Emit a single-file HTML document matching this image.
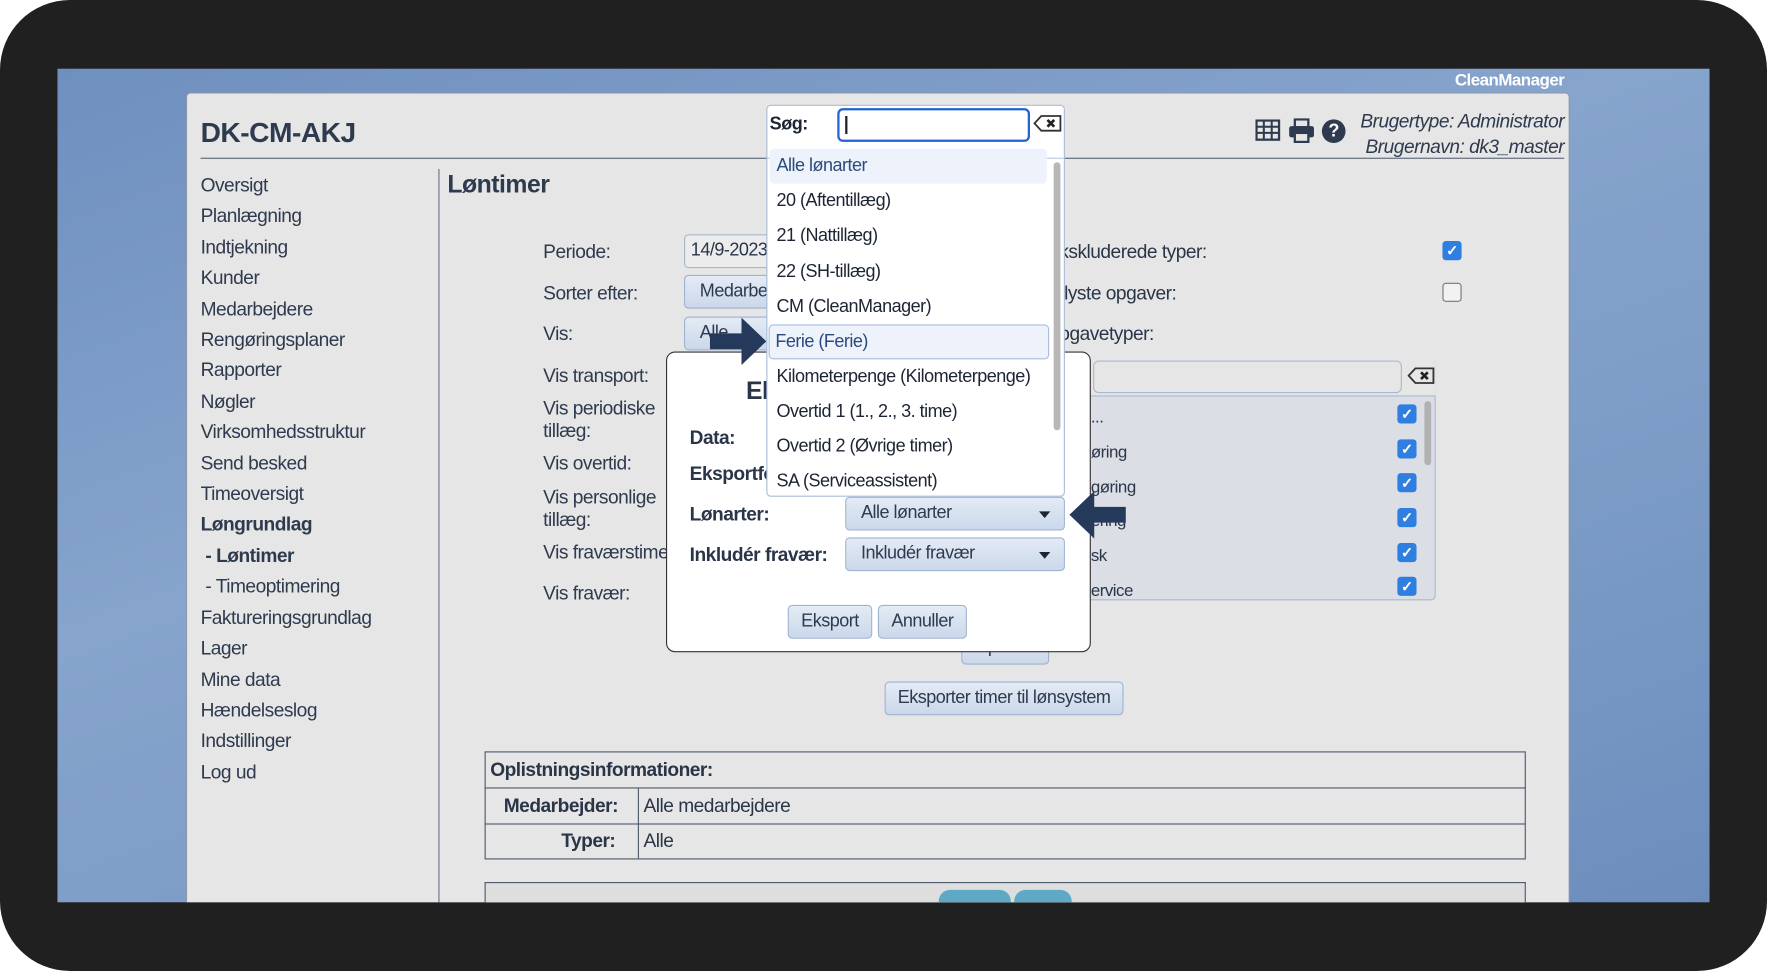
<!DOCTYPE html>
<html><head><meta charset="utf-8"><style>
*{box-sizing:border-box;margin:0;padding:0}
html,body{width:1767px;height:971px;overflow:hidden;background:#fff}
#s{position:absolute;left:0;top:0;width:1568px;height:862px;transform:scale(1.12691,1.12645);transform-origin:0 0;font-family:"Liberation Sans",sans-serif;color:#2a3548;letter-spacing:-0.45px}
.a{position:absolute}
#frame{left:0;top:0;width:1568px;height:862px;background:#202020;border-radius:62px}
#desk{left:51px;top:61px;width:1466px;height:740px;background:linear-gradient(160deg,#6f8fbf 0%,#86a4cc 40%,#7b9bc6 70%,#6d8ebd 100%)}
#panel{left:165px;top:82px;width:1228px;height:719px;background:#e6e6e6;border:1px solid #8a97aa;border-bottom:none;border-radius:4px 4px 0 0}
.side{left:178px;font-size:17px;color:#2e3a4e}
.lbl{left:482px;font-size:17px;color:#2e3a4e}
.btn{background:linear-gradient(#e3ebf5,#cbd8ea);border:1px solid #9fb3cf;border-radius:4px;font-size:16px;color:#2e3a4e;text-align:center}
.cb{width:17px;height:17px;border-radius:3px;background:#2f7fe0;color:#fff;font-size:13px;line-height:17px;text-align:center;font-weight:bold}
.item{left:689px;font-size:16px;color:#1d2433}
</style></head><body><div id="s">
<div class="a" id="frame"></div>
<div class="a" id="desk"></div>
<div class="a" style="left:1291px;top:63px;font-size:15px;font-weight:bold;color:#fff">CleanManager</div>
<div class="a" id="panel"></div>
<div class="a" style="left:178px;top:104px;font-size:25px;font-weight:bold;color:#2e3a4e">DK-CM-AKJ</div>
<div class="a" style="left:178px;top:140px;width:1210px;height:1px;background:#5a6578"></div>
<svg class="a" style="left:1114px;top:106px" width="24" height="20" viewBox="0 0 24 20"><rect x="1" y="1" width="20" height="17" fill="none" stroke="#2e3a4e" stroke-width="2"/><path d="M1 6.5H21M1 12H21M7.5 1V18M14.5 1V18" stroke="#2e3a4e" stroke-width="1.8"/></svg>
<svg class="a" style="left:1143px;top:105px" width="24" height="22" viewBox="0 0 24 22"><rect x="6" y="1" width="12" height="7" fill="none" stroke="#2e3a4e" stroke-width="2"/><rect x="1" y="7" width="22" height="10" rx="2" fill="#2e3a4e"/><rect x="6" y="13" width="12" height="8" fill="#e6e6e6" stroke="#2e3a4e" stroke-width="2"/></svg>
<div class="a" style="left:1173px;top:106px;width:21px;height:21px;border-radius:50%;background:#2e3a4e;color:#fff;font-weight:bold;font-size:16px;text-align:center;line-height:21px">?</div>
<div class="a" style="left:1190px;top:96px;width:198px;text-align:right;font-style:italic;font-size:17px;line-height:23px;color:#2e3a4e">Brugertype: Administrator<br>Brugernavn: dk3_master</div>
<div class="a side" style="top:151px;line-height:27.4px">Oversigt<br>Planlægning<br>Indtjekning<br>Kunder<br>Medarbejdere<br>Rengøringsplaner<br>Rapporter<br>Nøgler<br>Virksomhedsstruktur<br>Send besked<br>Timeoversigt<br><b>Løngrundlag</b><br><b>&nbsp;- Løntimer</b><br>&nbsp;- Timeoptimering<br>Faktureringsgrundlag<br>Lager<br>Mine data<br>Hændelseslog<br>Indstillinger<br>Log ud</div>
<div class="a" style="left:389px;top:150px;width:1px;height:651px;background:#6a7589"></div>
<div class="a" style="left:397px;top:151px;font-size:22px;font-weight:bold;color:#2e3a4e">Løntimer</div>
<div class="a lbl" style="top:214px">Periode:</div>
<div class="a lbl" style="top:251px">Sorter efter:</div>
<div class="a lbl" style="top:287px">Vis:</div>
<div class="a lbl" style="top:324px">Vis transport:</div>
<div class="a lbl" style="top:353px;line-height:20px">Vis periodiske<br>tillæg:</div>
<div class="a lbl" style="top:402px">Vis overtid:</div>
<div class="a lbl" style="top:432px;line-height:20px">Vis personlige<br>tillæg:</div>
<div class="a lbl" style="top:481px">Vis fraværstimer:</div>
<div class="a lbl" style="top:517px">Vis fravær:</div>
<div class="a" style="left:607px;top:208px;width:90px;height:30px;border:1px solid #a9b7c9;border-radius:4px;background:#ececec;font-size:16px;padding:5px 5px">14/9-2023</div>
<div class="a btn" style="left:607px;top:244px;width:90px;height:30px;text-align:left;padding:5px 13px">Medarbejder</div>
<div class="a btn" style="left:607px;top:281px;width:90px;height:30px;text-align:left;padding:5px 13px">Alle</div>
<div class="a" style="left:940px;top:214px;font-size:17px">kskluderede typer:</div>
<div class="a" style="left:940px;top:251px;font-size:17px">flyste opgaver:</div>
<div class="a" style="left:940px;top:287px;font-size:17px">ogavetyper:</div>
<div class="a cb" style="left:1280px;top:214px">✓</div>
<div class="a" style="left:1280px;top:251px;width:17px;height:17px;border:1px solid #777;border-radius:3px;background:#f2f2f2"></div>
<div class="a" style="left:955px;top:316px;width:319px;height:217px;background:#dbdee5;border:1px solid #a9b9d2;border-radius:4px"></div>
<div class="a" style="left:955px;top:316px;width:319px;height:36px;background:#e6e6e6;border-bottom:1px solid #a9b9d2"></div>
<div class="a" style="left:970px;top:320px;width:274px;height:29px;border:1px solid #a9b9d2;border-radius:5px;background:#e6e6e6"></div>
<svg class="a" style="left:1249px;top:325px" width="25" height="17" viewBox="0 0 25 17"><path d="M1 8.5L7 2H23V15H7Z" fill="#e6e6e6" stroke="#333" stroke-width="1.6"/><path d="M12 5.5L18 11.5M18 5.5L12 11.5" stroke="#222" stroke-width="2.4"/></svg>
<div class="a" style="left:968px;top:356px;font-size:15px;line-height:30.8px">...<br>øring<br>gøring<br>ering<br>sk<br>ervice</div>
<div class="a cb" style="left:1240px;top:359px">✓</div><div class="a cb" style="left:1240px;top:390px">✓</div><div class="a cb" style="left:1240px;top:420px">✓</div><div class="a cb" style="left:1240px;top:451px">✓</div><div class="a cb" style="left:1240px;top:482px">✓</div><div class="a cb" style="left:1240px;top:512px">✓</div>
<div class="a" style="left:1264px;top:356px;width:6px;height:57px;background:#b2b2b2;border-radius:3px"></div>
<div class="a btn" style="left:853px;top:560px;width:78px;height:30px;line-height:28px">Opdater</div>
<div class="a btn" style="left:785px;top:605px;width:212px;height:30px;line-height:28px">Eksporter timer til lønsystem</div>
<div class="a" style="left:430px;top:667px;width:924px;height:96px;border:1px solid #4e5a6e"></div>
<div class="a" style="left:430px;top:699px;width:924px;height:1px;background:#4e5a6e"></div>
<div class="a" style="left:430px;top:731px;width:924px;height:1px;background:#4e5a6e"></div>
<div class="a" style="left:566px;top:700px;width:1px;height:62px;background:#4e5a6e"></div>
<div class="a" style="left:435px;top:674px;font-size:17px;font-weight:bold">Oplistningsinformationer:</div>
<div class="a" style="left:447px;top:706px;font-size:17px;font-weight:bold">Medarbejder:</div>
<div class="a" style="left:498px;top:737px;font-size:17px;font-weight:bold">Typer:</div>
<div class="a" style="left:571px;top:706px;font-size:17px">Alle medarbejdere</div>
<div class="a" style="left:571px;top:737px;font-size:17px">Alle</div>
<div class="a" style="left:430px;top:783px;width:924px;height:18px;border:1px solid #4e5a6e;border-bottom:none;background:#dedede"></div>
<div class="a" style="left:833px;top:790px;width:64px;height:11px;border-radius:10px 10px 0 0;background:#5ea9c6"></div>
<div class="a" style="left:900px;top:790px;width:51px;height:11px;border-radius:10px 10px 0 0;background:#5ea9c6"></div>
<div class="a" style="left:591px;top:312px;width:377px;height:267px;background:#fff;border:1.5px solid #333;border-radius:8px"></div>
<div class="a" style="left:662px;top:334px;font-size:22px;font-weight:bold">Ek</div>
<div class="a" style="left:612px;top:379px;font-size:17px;font-weight:bold">Data:</div>
<div class="a" style="left:612px;top:411px;font-size:17px;font-weight:bold">Eksportformat:</div>
<div class="a" style="left:612px;top:447px;font-size:17px;font-weight:bold">Lønarter:</div>
<div class="a" style="left:612px;top:483px;font-size:17px;font-weight:bold">Inkludér fravær:</div>
<div class="a btn" style="left:750px;top:441px;width:195px;height:30px;text-align:left;padding:5px 13px">Alle lønarter<span style="position:absolute;right:12px;top:12px;border:5px solid transparent;border-top:6px solid #1d2433"></span></div>
<div class="a btn" style="left:750px;top:477px;width:195px;height:30px;text-align:left;padding:5px 13px">Inkludér fravær<span style="position:absolute;right:12px;top:12px;border:5px solid transparent;border-top:6px solid #1d2433"></span></div>
<div class="a btn" style="left:699px;top:537px;width:75px;height:30px;line-height:28px">Eksport</div>
<div class="a btn" style="left:779px;top:537px;width:79px;height:30px;line-height:28px">Annuller</div>
<div class="a" style="left:680px;top:93px;width:265px;height:348px;background:#fff;border:1px solid #a9bdd9;border-radius:4px;overflow:hidden">
<div style="height:47px;border-bottom:1px solid #b9cae0"></div></div>
<div class="a" style="left:683px;top:102px;font-size:16px;font-weight:bold;color:#1d2433">Søg:</div>
<div class="a" style="left:743px;top:96px;width:171px;height:30px;border:2px solid #1f62d0;border-radius:5px;background:#fff"><div style="position:absolute;left:5px;top:5px;width:1.5px;height:16px;background:#222"></div></div>
<svg class="a" style="left:917px;top:101px" width="26" height="17" viewBox="0 0 26 17"><path d="M1 8.5L7 2H24V15H7Z" fill="#fff" stroke="#333" stroke-width="1.6"/><path d="M12.5 5.5L18.5 11.5M18.5 5.5L12.5 11.5" stroke="#222" stroke-width="2.4"/></svg>
<div class="a" style="left:683px;top:132px;width:246px;height:31px;background:#eef3fb;border-radius:4px"></div>
<div class="a" style="left:682px;top:288px;width:249px;height:31px;background:#eef3fb;border:1px solid #a9bdd9;border-radius:4px"></div>
<div class="a" style="left:935px;top:144px;width:6px;height:238px;background:#b7b7b7;border-radius:3px"></div>
<div class="a item" style="left:689px;top:139px;color:#2a4a80">Alle lønarter</div>
<div class="a item" style="top:170px">20 (Aftentillæg)</div>
<div class="a item" style="top:201px">21 (Nattillæg)</div>
<div class="a item" style="top:233px">22 (SH-tillæg)</div>
<div class="a item" style="top:264px">CM (CleanManager)</div>
<div class="a item" style="left:688px;top:295px;color:#2a4a80">Ferie (Ferie)</div>
<div class="a item" style="top:326px">Kilometerpenge (Kilometerpenge)</div>
<div class="a item" style="top:357px">Overtid 1 (1., 2., 3. time)</div>
<div class="a item" style="top:388px">Overtid 2 (Øvrige timer)</div>
<div class="a item" style="top:419px">SA (Serviceassistent)</div>
<svg class="a" style="left:629px;top:280px" width="52" height="46" viewBox="0 0 52 46"><path d="M1 16H29V2L51 23L29 44V30H1Z" fill="#253a5a"/></svg>
<svg class="a" style="left:948px;top:434px" width="52" height="46" viewBox="0 0 52 46"><path d="M51 16H23V2L1 23L23 44V30H51Z" fill="#253a5a"/></svg>
</div></body></html>
